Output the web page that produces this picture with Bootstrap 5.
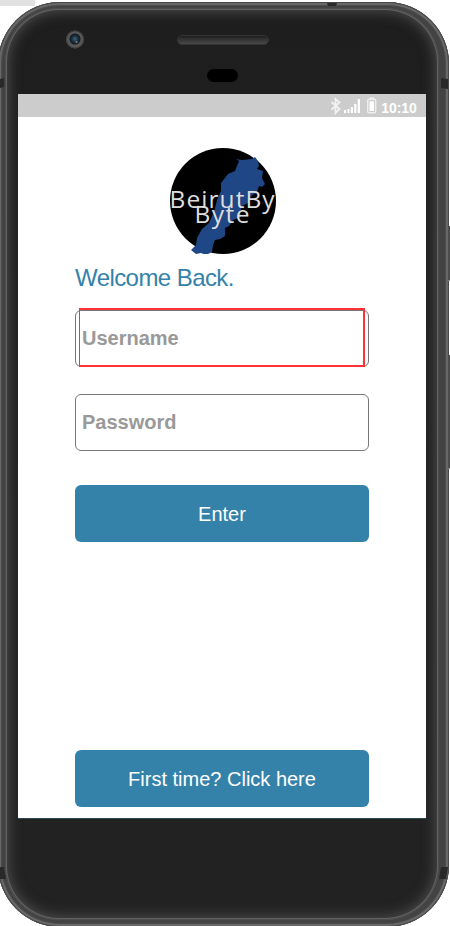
<!DOCTYPE html>
<html lang="en">
<head>
<meta charset="utf-8">
<meta name="viewport" content="width=device-width, initial-scale=1">
<title>BeirutByByte</title>
<link href="https://cdn.jsdelivr.net/npm/bootstrap@5.3.0/dist/css/bootstrap.min.css" rel="stylesheet">
<style>
body{font-family:"Liberation Sans",Arial,sans-serif;background:#fff;height:926px}
.corner-tab{left:0;top:0;width:35px;height:6px;background:#e1e1e1}
.device{width:451px;height:925px;margin:2px 0 0 -2px;padding:6px 10px 7px 7px;border-radius:62px;background:#434343;
box-shadow:inset 0 0 0 1px #484848,inset 0 0 0 3px #686868,inset 0 0 0 4px #4c4c4c}
.face{width:434px;height:912px;border-radius:54px;background:linear-gradient(#1e1e1e,#222 90%);padding:0 13px;
box-shadow:inset 0 0 0 1px #4c4c4c,inset 0 0 0 2px #626262,inset 0 0 14px 3px #505050}
.top-bezel{height:86px;margin:0 -13px}
.screen{width:408px;height:725px;background:#fff;border-bottom:1px solid #2c4a50}
.status{height:23px;background:#ccc}
.content-col{width:294px;margin-left:57px;height:701px;padding-top:31px}
.logo{width:106px;height:106px;margin-left:95px}
.title{font-size:24px;line-height:28px;letter-spacing:-.57px;color:#3482aa;margin-top:10px}
.field{height:57px;border:1px solid #777;border-radius:6px;padding:0 6px;font-size:20px;font-weight:700;color:#212529}
.field::placeholder{color:#999;opacity:1}
.field:focus{box-shadow:none;border-color:#777}
.user-box{margin-top:18px}
.focus-frame{left:4px;top:-2px;width:286px;height:59px;border:solid #f33;border-width:2px 2px 2px 1px;pointer-events:none}
.pass-box{margin-top:27px}
.btn-main{height:57px;border:0;border-radius:6px;background:#3482aa;color:#fff;font-size:20px;padding:0}
.btn-main:hover{background:#2b7096;color:#fff}
.enter{margin-top:34px}
.first{margin-top:208px}
.seam{background:#292929}
.key{background:#484848;border-top:1px solid #333;border-bottom:1px solid #777;width:3px;left:447px}
</style>
<script src="https://cdn.jsdelivr.net/npm/bootstrap@5.3.0/dist/js/bootstrap.bundle.min.js"></script>
</head>
<body class="m-0 overflow-hidden position-relative">
<div class="position-absolute corner-tab"></div>
<!-- antenna seams and side keys over the phone edge -->
<svg class="position-absolute top-0 start-0 z-1 pe-none" width="450" height="926">
<g fill="#292929"><path d="M327 3h10l-1 3h-8zM0 79l4-1v9l-4 1zM441 78l7 1v10l-7-1zM0 867h4l2 12H0zM441 867h7l-2 12h-7z"/></g>
<g fill="#4c4c4c"><path d="M448 226h2v54h-2zM448 355h2v113h-2z"/></g>
<path d="M448 280.5h2M448 468.5h2" stroke="#888"/>
</svg>
<main class="device position-relative overflow-hidden">
<div class="face">
<div class="top-bezel">
<svg class="d-block" width="434" height="86" viewBox="5 8 434 86">
<defs><linearGradient id="ear" x2="0" y2="1"><stop stop-color="#171717"/><stop offset=".35" stop-color="#303030"/><stop offset="1" stop-color="#494949"/></linearGradient>
<radialGradient id="lens"><stop stop-color="#3c6680"/><stop offset=".45" stop-color="#21394a"/><stop offset="1" stop-color="#0c141b"/></radialGradient></defs>
<circle cx="75" cy="39.5" r="9" fill="#575757"/><circle cx="75" cy="39.5" r="8.5" fill="none" stroke="#3f3f3f"/>
<circle cx="75" cy="39" r="5.5" fill="url(#lens)"/><circle cx="76.5" cy="42" r="1" fill="#7a8790"/>
<rect x="177.5" y="35.5" width="91" height="9" rx="4.5" fill="url(#ear)" stroke="#353535"/>
<rect x="207" y="69" width="31" height="13" rx="6.5" fill="#000"/>
</svg>
</div>
<div class="screen">
<div class="status">
<svg class="d-block" width="408" height="23" viewBox="18 94 408 23">
<path d="M331.5 102l8 7-4 4V99l4 3.5-8 7" fill="none" stroke="#f2f2f2" stroke-width="1.8"/>
<path d="M344 110h2v3h-2zM347.400 109h2v4h-2zM350.800 107h2.200v6h-2.200zM354.200 104h2.200v9h-2.200zM357.700 99h2.300v14h-2.300z" fill="#fff"/>
<rect x="367.700" y="99.200" width="8" height="13.600" rx="1.500" fill="none" stroke="#eee" stroke-width="1.400"/><path d="M369.500 97.500h4.500v2h-4.500z" fill="#eee"/><path d="M369.500 101.300h4.500v9.700h-4.500z" fill="#fff"/>
<text x="381.300" y="113" textLength="35.500" fill="#fff" font-size="14" font-weight="700" font-family="Liberation Sans, sans-serif">10:10</text>
</svg>
</div>
<div class="content-col d-flex flex-column">
<svg class="logo flex-shrink-0" viewBox="170 149 106 106" role="img" aria-label="BeirutByByte">
<circle cx="223" cy="202" r="53" fill="#000"/>
<path d="M236 160l6 1 10-1 3-2 3 4 1 5-2 3 6 2-1 7 3 6-3 3-3-1-2 6-6 4-3 7-6 3-2 6 1 5-8 3-4 6-4 2v8l-5 3-5 1-2 5-1 7-6 3-5-2-5 1-5-4 5-5 1-7 5-9 7-6 5-11 3-12 4-9v-8l7-9 7-3 4-10z" fill="#204785"/>
<g fill="#dedede" font-family="Open Sans, sans-serif" font-size="24.500">
<text x="169.600" y="209" textLength="105">BeirutBy</text>
<text x="194.500" y="224" textLength="55">Byte</text>
</g>
</svg>
<h1 class="title fw-normal mb-0">Welcome Back.</h1>
<div class="user-box position-relative"><input class="form-control field" type="text" placeholder="Username" aria-label="Username"><div class="focus-frame position-absolute"></div></div>
<div class="pass-box"><input class="form-control field" type="password" placeholder="Password" aria-label="Password"></div>
<button class="btn btn-main enter w-100" type="button">Enter</button>
<button class="btn btn-main first w-100" type="button">First time? Click here</button>
</div>
</div>
</div>
</main>
</body>
</html>
